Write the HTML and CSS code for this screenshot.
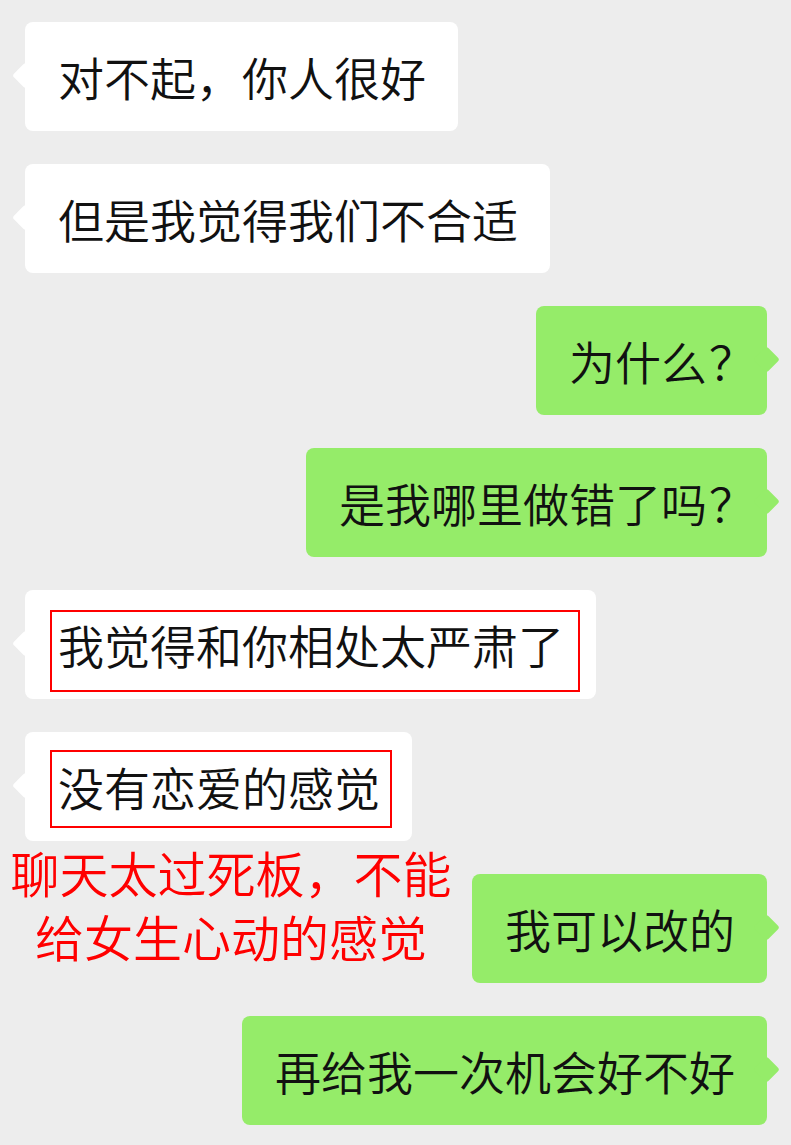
FILE: index.html
```html
<!DOCTYPE html>
<html lang="zh-CN">
  <head>
    <meta charset="UTF-8" />
    <meta name="viewport" content="width=device-width, initial-scale=1" />
    <title>聊天记录</title>
    <link rel="stylesheet" href="styles.css">
  </head>
  <body>
    <div class="chat">
      <div class="row left">
        <div class="bubble">对不起，你人很好</div>
      </div>
      <div class="row left">
        <div class="bubble">但是我觉得我们不合适</div>
      </div>
      <div class="row right">
        <div class="bubble mine">为什么<span class="q">？</span></div>
      </div>
      <div class="row right">
        <div class="bubble mine">是我哪里做错了吗<span class="q">？</span></div>
      </div>
      <div class="row left">
        <div class="bubble"><span class="mark">我觉得和你相处太严肃了</span></div>
      </div>
      <div class="row left">
        <div class="bubble"><span class="mark mark-short">没有恋爱的感觉</span></div>
      </div>
      <div class="row right">
        <p class="note">聊天太过死板，不能<br />给女生心动的感觉</p>
        <div class="bubble mine">我可以改的</div>
      </div>
      <div class="row right">
        <div class="bubble mine">再给我一次机会好不好</div>
      </div>
    </div>
  </body>
</html>
```

FILE: styles.css
```css
body {
  margin: 0;
  background-color: #ededed;
  font-family: "Noto Sans CJK SC", "Noto Sans", sans-serif;
  font-weight: 350;
}

.chat {
  padding: 22px 0 20px;
}

.row {
  position: relative;
  display: flex;
  margin-bottom: 33px;
}

.row:last-child {
  margin-bottom: 0;
}

.left {
  justify-content: flex-start;
  padding-left: 25px;
}

.right {
  justify-content: flex-end;
  padding-right: 24px;
}

.bubble {
  position: relative;
  padding: 24px 32px 24px 33px;
  border-radius: 8px;
  background-color: #ffffff;
  color: #111111;
  font-size: 46px;
  line-height: 61px;
  white-space: nowrap;
}

/* little pointer on the side of each bubble */
.bubble::before {
  content: "";
  position: absolute;
  top: 50%;
  left: -9px;
  width: 19px;
  height: 19px;
  margin-top: -11px;
  border-radius: 3px;
  background-color: inherit;
  transform: rotate(45deg);
}

.mine {
  background-color: #95ec69;
}

.mine::before {
  left: auto;
  right: -9px;
}

.q {
  font-feature-settings: "halt";
  padding: 0 3px 0 2px;
}

/* red highlight box round a message */
.mark {
  position: relative;
}

.mark::after {
  content: "";
  position: absolute;
  top: -1px;
  bottom: -15px;
  left: -8px;
  right: -16px;
  border: 2px solid #ff0000;
}

.mark-short::after {
  top: -3px;
  bottom: -9px;
  right: -12px;
}

.note {
  position: absolute;
  top: -34px;
  left: 0;
  width: 462px;
  margin: 0;
  color: #ff0000;
  font-size: 49px;
  line-height: 64px;
  text-align: center;
}
```
